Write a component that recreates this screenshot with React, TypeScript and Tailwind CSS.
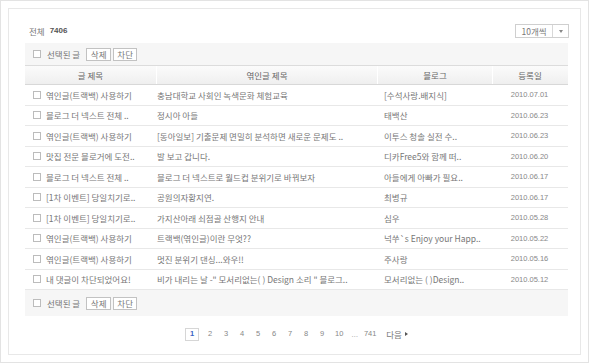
import React from "react";

const rows: [string, string, string, string][] = [
  ["엮인글(트랙백) 사용하기", "충남대학교 사회인 녹색문화 체험교육", "[수석사랑.배지식]", "2010.07.01"],
  ["블로그 더 넥스트 전체 ..", "정시아 아들", "태백산", "2010.06.23"],
  ["엮인글(트랙백) 사용하기", "[동아일보] 기출문제 면밀히 분석하면 새로운 문제도 ..", "이투스 청솔 실전 수..", "2010.06.23"],
  ["맛집 전문 블로거에 도전..", "발 보고 갑니다.", "디카Free5와 함께 떠..", "2010.06.20"],
  ["블로그 더 넥스트 전체 ..", "블로그 더 넥스트로 월드컵 분위기로 바꿔보자", "아들에게 아빠가 필요..", "2010.06.17"],
  ["[1차 이벤트] 당일치기로..", "공원의자황지연.", "최병규", "2010.06.17"],
  ["[1차 이벤트] 당일치기로..", "가지산아래 쇠점골 산행지 안내", "심우", "2010.05.28"],
  ["엮인글(트랙백) 사용하기", "트랙백(엮인글)이란 무엇??", "넉쑤`s Enjoy your Happ..", "2010.05.22"],
  ["엮인글(트랙백) 사용하기", "멋진 분위기 댄싱...와우!!", "주사랑", "2010.05.16"],
  ["내 댓글이 차단되었어요!", "비가 내리는 날 -\" 모서리없는( ) Design 소리 \" 블로그..", "모서리없는 ( )Design..", "2010.05.12"],
];

const lib = { fontFamily: '"Liberation Sans", Arial, sans-serif' };

function Box() {
  return <span className="inline-block w-[8px] h-[8px] border border-[#bcbcbc] bg-white shrink-0" />;
}

function Toolbar({ h }: { h: string }) {
  return (
    <div className={`flex items-center bg-[#f6f6f6] pl-[8px] ${h}`}>
      <Box />
      <span className="ml-[6px] text-[#777]">선택된 글</span>
      <span className="ml-[6px] h-[13px] w-[25px] border border-[#c2c2c2] bg-white text-[#777] flex items-center justify-center leading-none">삭제</span>
      <span className="ml-[2px] h-[13px] w-[24px] border border-[#c2c2c2] bg-white text-[#777] flex items-center justify-center leading-none">차단</span>
    </div>
  );
}

export default function App() {
  const cols = "grid grid-cols-[131px_221px_115px_75px]";
  return (
    <div
      className="w-[589px] h-[363px] border border-[#e3e3e3] bg-white p-[7px] text-[8.5px] leading-none"
      style={{ fontFamily: '"Noto Sans CJK KR", "Noto Sans", sans-serif' }}
    >
      <div className="h-full border border-[#e8e8e8] bg-white pl-[16px] pr-[12px] pt-[15px]">
        <div className="flex items-center justify-between h-[14px] pl-[4px]">
          <div className="flex items-center text-[#777]">
            <span>전체</span>
            <span className="ml-[5px] font-bold text-[#555] text-[8px]" style={lib}>7406</span>
          </div>
          <div className="flex h-[14px] w-[54px] border border-[#cfcfcf] bg-white mr-[-1px]">
            <div className="flex-1 flex items-center justify-center text-[#777]">10개씩</div>
            <div className="w-[16px] border-l border-[#d8d8d8] flex items-center justify-center">
              <span className="block w-0 h-0 border-l-[2.5px] border-r-[2.5px] border-t-[3px] border-l-transparent border-r-transparent border-t-[#888]" />
            </div>
          </div>
        </div>

        <div className="mt-[5px]">
          <Toolbar h="h-[22px]" />
          <div className={`${cols} h-[20px] bg-gradient-to-b from-[#fbfbfb] to-[#efefef] border-t border-[#dcdcdc] border-b border-b-[#d8d8d8] text-[#666]`}>
            <div className="flex items-center justify-center">글 제목</div>
            <div className="flex items-center justify-center border-l border-white">엮인글 제목</div>
            <div className="flex items-center justify-center border-l border-white">블로그</div>
            <div className="flex items-center justify-center border-l border-white">등록일</div>
          </div>
          {rows.map((r, i) => (
            <div key={i} className={`${cols} h-[20.5px] border-b border-[#e8e8e8] text-[#777]`}>
              <div className="flex items-center pl-[8px]">
                <Box />
                <span className="ml-[5px] whitespace-nowrap">{r[0]}</span>
              </div>
              <div className="flex items-center pl-[1px] whitespace-nowrap overflow-hidden">{r[1]}</div>
              <div className="flex items-center pl-[7px] whitespace-nowrap">{r[2]}</div>
              <div className="flex items-center justify-center text-[7.5px] text-[#888]" style={lib}>
                {r[3]}
              </div>
            </div>
          ))}
          <Toolbar h="h-[26px]" />
          <div className="h-[36px] flex items-center justify-center text-[#888]">
            <span
              className="w-[14px] h-[13px] border border-[#d6d6d6] flex items-center justify-center font-bold text-[#3a62c4] text-[7.5px] mr-[3px]"
              style={lib}
            >
              1
            </span>
            {["2", "3", "4", "5", "6", "7", "8", "9"].map((n) => (
              <span key={n} className="w-[16px] text-center text-[7.5px]" style={lib}>
                {n}
              </span>
            ))}
            <span className="w-[18px] text-center text-[7.5px]" style={lib}>10</span>
            <span className="w-[13px] text-center text-[7px]" style={lib}>…</span>
            <span className="w-[18px] text-center text-[7.5px]" style={lib}>741</span>
            <span className="ml-[7px] text-[#777]">다음</span>
            <span className="ml-[3px] block w-0 h-0 border-t-[2.5px] border-b-[2.5px] border-l-[3px] border-t-transparent border-b-transparent border-l-[#555]" />
          </div>
        </div>
      </div>
    </div>
  );
}
